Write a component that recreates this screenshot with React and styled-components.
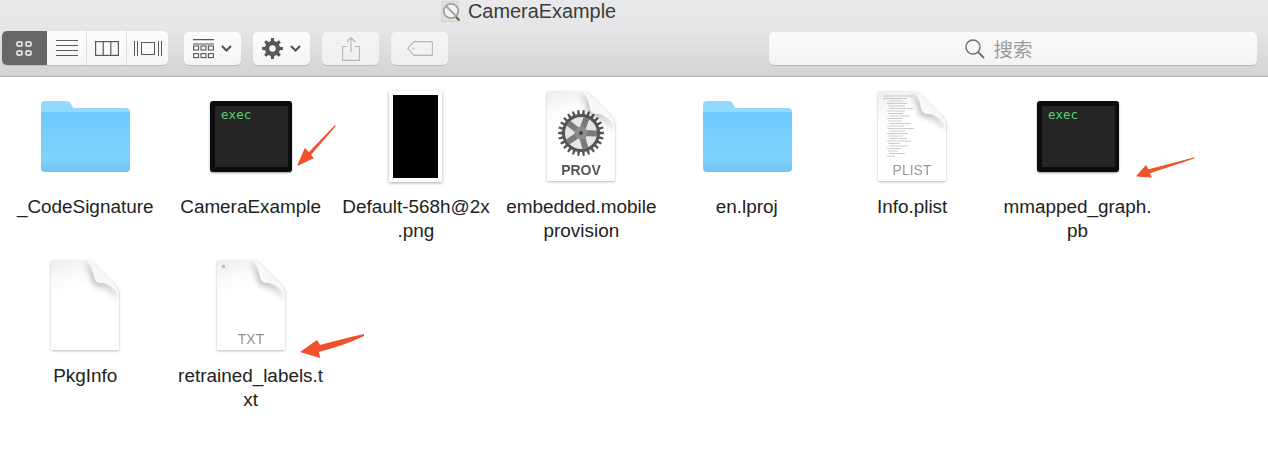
import styled, { createGlobalStyle } from "styled-components";

const GlobalStyle = createGlobalStyle`
  html, body {
    margin: 0;
    background: #fff;
  }
  body {
    font-family: "Liberation Sans", Arial, sans-serif;
    overflow: hidden;
  }
`;

const Window = styled.div`
  width: 1268px;
  height: 450px;
  background: #fff;
  overflow: hidden;
`;

const Toolbar = styled.header`
  height: 76px;
  box-sizing: content-box;
  border-bottom: 1px solid #b4b3b4;
  background: linear-gradient(#e9e8ea, #e5e4e6 40%, #d4d3d4);
`;

const TitleRow = styled.div`
  display: flex;
  align-items: center;
  gap: 6px;
  height: 23px;
  margin-bottom: 8px;
  padding-left: 441px;
`;

const Title = styled.span`
  font-size: 19.9px;
  color: #3c3c3c;
`;

const Controls = styled.div`
  display: flex;
  align-items: flex-start;
  padding: 0 11px 0 2px;
`;

const Segments = styled.div`
  display: flex;
  height: 34px;
  border-radius: 5px;
  overflow: hidden;
  box-shadow: 0 1px 0 #bdbcbd;
`;

const Segment = styled.button`
  display: flex;
  align-items: center;
  justify-content: center;
  width: ${(p) => p.$width}px;
  padding: 0;
  border: 0;
  border-right: 1px solid ${(p) => (p.$active ? "#666" : "#dedede")};
  background: ${(p) => (p.$active ? "#666666" : "linear-gradient(#fdfdfd, #f5f5f5)")};
  color: ${(p) => (p.$active ? "#f4f4f4" : "#5a5a5a")};
  &:last-child {
    border-right: 0;
  }
`;

const ToolButton = styled.button`
  display: flex;
  align-items: center;
  justify-content: center;
  gap: 7px;
  box-sizing: border-box;
  width: ${(p) => p.$width}px;
  height: 33px;
  margin-top: 1px;
  margin-left: ${(p) => p.$gap}px;
  padding: 0;
  border: 0;
  border-radius: 5px;
  background: ${(p) =>
    p.$disabled ? "linear-gradient(#f4f4f4, #efefef)" : "linear-gradient(#fdfdfd, #f5f5f5)"};
  box-shadow: 0 1px 0 #bdbcbd;
  color: ${(p) => (p.$disabled ? "#b6b6b6" : "#585858")};
`;

const SearchBox = styled.div`
  display: flex;
  align-items: center;
  justify-content: center;
  gap: 8px;
  box-sizing: border-box;
  width: 488px;
  height: 33px;
  margin-top: 1px;
  margin-left: auto;
  padding-right: 28px;
  border-radius: 5px;
  background: linear-gradient(#fbfbfb, #f4f3f4);
  box-shadow: 0 1px 0 #b9b8b9;
  color: #6f6f6f;
`;

const SearchText = styled.span`
  font-family: "Noto Sans CJK SC", "Liberation Sans", sans-serif;
  font-size: 19.5px;
  color: #9c9c9c;
`;

const FileGrid = styled.main`
  display: grid;
  grid-template-columns: repeat(7, 165.4px);
  row-gap: 16px;
  padding: 13px 0 0 3px;
`;

const Tile = styled.div`
  position: relative;
  display: flex;
  flex-direction: column;
  align-items: center;
`;

const IconBox = styled.div`
  display: flex;
  align-items: center;
  justify-content: center;
  height: 92px;
  margin-bottom: 13px;
`;

const Label = styled.div`
  width: 164px;
  min-height: 48px;
  margin-left: -1px;
  font-size: 18.9px;
  line-height: 24px;
  color: #222;
  text-align: center;
  white-space: pre-line;
`;

const Thumbnail = styled.div`
  box-sizing: border-box;
  width: 53px;
  height: 91px;
  margin-left: -1px;
  border: 4px solid #fff;
  background: #000;
  box-shadow: 0 1px 3px rgba(0, 0, 0, 0.35);
`;

const ExecFrame = styled.div`
  box-sizing: border-box;
  width: 82px;
  height: 71px;
  padding: 5px 4px 5px 5px;
  border-radius: 3px;
  background: #0c0c0c;
  box-shadow: 0 1px 2px rgba(0, 0, 0, 0.4);
`;

const ExecScreen = styled.div`
  height: 100%;
  padding-left: 6px;
  background: #252525;
  font-family: "DejaVu Sans Mono", "Liberation Mono", monospace;
  font-size: 12.5px;
  line-height: 17px;
  color: #55d66a;
`;

const Callout = styled.svg`
  position: absolute;
  left: ${(p) => p.$left}px;
  top: ${(p) => p.$top}px;
`;

const DocSvg = styled.svg`
  margin-left: -1px;
  filter: drop-shadow(0 1px 1px rgba(0, 0, 0, 0.28));
  overflow: visible;
`;

const Flap = styled.path`
  filter: drop-shadow(-2px 3px 3px rgba(0, 0, 0, 0.28));
`;

// toothed outline, used for the toolbar gear and the PROV badge
function gearPoints(cx, cy, outer, inner, teeth) {
  const pts = [];
  const step = (Math.PI * 2) / teeth;
  for (let i = 0; i < teeth; i++) {
    const a = i * step;
    [
      [-0.3, inner],
      [-0.17, outer],
      [0.17, outer],
      [0.3, inner],
    ].forEach(([o, r]) => {
      const t = a + o * step;
      pts.push(`${(cx + Math.cos(t) * r).toFixed(2)},${(cy + Math.sin(t) * r).toFixed(2)}`);
    });
  }
  return pts.join(" ");
}

const Chevron = () => (
  <svg width="11" height="7" viewBox="0 0 11 7" fill="none" stroke="#505050" strokeWidth="2">
    <path d="M1 1l4.500 4.500L10 1" />
  </svg>
);

const IconCells = () => (
  <svg width="16" height="15" viewBox="0 0 16 15" fill="none" stroke="currentColor" strokeWidth="1.5">
    <rect x="1" y="1" width="5" height="4" rx="1" />
    <rect x="10" y="1" width="5" height="4" rx="1" />
    <rect x="1" y="10" width="5" height="4" rx="1" />
    <rect x="10" y="10" width="5" height="4" rx="1" />
  </svg>
);

const IconList = () => (
  <svg width="22" height="16" viewBox="0 0 22 16" stroke="currentColor" strokeWidth="1">
    <path d="M0 .5h22M0 5.500h22M0 10.500h22M0 15.500h22" />
  </svg>
);

const IconColumns = () => (
  <svg width="24" height="15" viewBox="0 0 24 15" fill="none" stroke="currentColor" strokeWidth="1.2">
    <rect x=".6" y=".6" width="22.8" height="13.8" />
    <path d="M8.200 1v13M15.800 1v13" />
  </svg>
);

const IconCover = () => (
  <svg width="28" height="15" viewBox="0 0 28 15" fill="none" stroke="currentColor" strokeWidth="1">
    <rect x="7.500" y="1.500" width="13" height="12" />
    <path d="M.5 0v15M3.500 0v15M24.500 0v15M27.500 0v15" />
  </svg>
);

const IconArrange = () => (
  <svg width="21" height="20" viewBox="0 0 21 20" fill="none" stroke="currentColor" strokeWidth="1.1">
    <path d="M0 .6h21M0 5h21" />
    <rect x=".6" y="7" width="5" height="4" />
    <rect x="8" y="7" width="5" height="4" />
    <rect x="15.400" y="7" width="5" height="4" />
    <rect x=".6" y="14.600" width="5" height="4" />
    <rect x="8" y="14.600" width="5" height="4" />
    <rect x="15.400" y="14.600" width="5" height="4" />
  </svg>
);

const IconGear = () => (
  <svg width="21" height="21" viewBox="0 0 21 21">
    <polygon points={gearPoints(10.5, 10.5, 10.5, 7.6, 8)} fill="currentColor" />
    <circle cx="10.5" cy="10.5" r="3.2" fill="#f8f8f8" />
  </svg>
);

const IconShare = () => (
  <svg width="18" height="24" viewBox="0 0 18 24" fill="none" stroke="currentColor" strokeWidth="1.1">
    <path d="M5.500 9.500H.6v13.900h16.800V9.500h-4.900M9 15V1M4.800 5L9 .8 13.200 5" />
  </svg>
);

const IconTag = () => (
  <svg width="26" height="15" viewBox="0 0 26 15" fill="none" stroke="currentColor" strokeWidth="1.1">
    <path d="M7 .6h17.400a1 1 0 0 1 1 1v11.800a1 1 0 0 1-1 1H7L.8 7.500z" />
    <circle cx="6.5" cy="7.5" r=".9" fill="currentColor" stroke="none" />
  </svg>
);

const IconSearch = () => (
  <svg width="20" height="20" viewBox="0 0 20 20" fill="none" stroke="currentColor">
    <circle cx="8" cy="8" r="7" strokeWidth="1.4" />
    <path d="M13 13l6 6" strokeWidth="1.8" />
  </svg>
);

const TitleIcon = () => (
  <svg width="21" height="22" viewBox="0 0 21 22">
    <rect x="1" y="0.5" width="16" height="20" fill="#e4e3e2" stroke="#cfcfcf" />
    <circle cx="10" cy="10" r="7.2" fill="#f3f3f3" stroke="#a5a5a5" strokeWidth="2" />
    <path d="M5.500 5.500l9 9" stroke="#a5a5a5" strokeWidth="2" />
    <path d="M15 16l3.500 3.500" stroke="#6b5a3a" strokeWidth="2" />
  </svg>
);

const FolderIcon = () => (
  <svg width="89" height="71" viewBox="0 0 89 71">
    <defs>
      <linearGradient id="folderBody" x1="0" y1="0" x2="0" y2="1">
        <stop offset="0" stopColor="#6dcbfc" />
        <stop offset="0.8" stopColor="#80d3fe" />
        <stop offset="0.84" stopColor="#79cdf7" />
        <stop offset="1" stopColor="#70c4ee" />
      </linearGradient>
    </defs>
    <path d="M0 4a4 4 0 0 1 4-4h21c3 0 4 1 5 3l1 2c.6 1 1.400 2 3 2h51a4 4 0 0 1 4 4v10H0z" fill="#92d9fd" />
    <path d="M0 11h89v56a4 4 0 0 1-4 4H4a4 4 0 0 1-4-4z" fill="url(#folderBody)" />
  </svg>
);

const ProvGear = () => {
  const spokes = [0, 72, 144, 216, 288];
  return (
    <g>
      <polygon points={gearPoints(35, 42, 23, 19, 26)} fill="#555" />
      <circle cx="35" cy="42" r="16" fill="#e6e6e6" />
      {spokes.map((deg) => (
        <rect key={deg} x="32" y="26" width="6" height="16" fill="#7a7a7a" transform={`rotate(${deg + 20} 35 42)`} />
      ))}
      <circle cx="35" cy="42" r="6.5" fill="#8c8c8c" />
      <circle cx="35" cy="42" r="2" fill="#444" />
    </g>
  );
};

const PlistLines = () => {
  const widths = [30, 24, 14, 20, 17, 24, 18, 15, 21, 15, 14, 22, 17, 26, 16, 21, 15, 18, 24, 12, 19, 14, 10, 16, 8];
  return (
    <g stroke="#b5b5b5" strokeWidth="0.7">
      {widths.map((w, i) => (
        <path key={i} d={`M${i < 2 ? 6 : 10 + (i % 3)} ${5 + i * 2.5}h${w}`} />
      ))}
    </g>
  );
};

// document page with a folded top right corner
const DocIcon = ({ tag, tagWeight, tagColor, id, children }) => (
  <DocSvg width="70" height="90" viewBox="0 0 70 90">
    <defs>
      <linearGradient id={`page-${id}`} x1="0" y1="0" x2="0.1" y2="0.4">
        <stop offset="0" stopColor="#ececec" />
        <stop offset="0.6" stopColor="#fbfbfb" />
        <stop offset="1" stopColor="#fff" />
      </linearGradient>
    </defs>
    <path
      d="M1 1.500A1.500 1.500 0 0 1 2.500 0H37c2 0 4 1 6 3l21 21c4 4 5 8 5 12v52.500a1.500 1.500 0 0 1-1.500 1.500h-65A1.500 1.500 0 0 1 1 88.500z"
      fill={`url(#page-${id})`}
    />
    {children}
    <Flap d="M37 0c2 0 4 1 6 3l21 21c4 4 5 8 5 12-5-8-11-13-18-13-4 0-6-2-7-6-1-5-3-12-7-17z" fill="#f8f8f8" />
    {tag && (
      <text
        x="35"
        y="84"
        textAnchor="middle"
        fontFamily="Liberation Sans, Arial, sans-serif"
        fontSize="14"
        fontWeight={tagWeight}
        fill={tagColor}
      >
        {tag}
      </text>
    )}
  </DocSvg>
);

const Exec = () => (
  <ExecFrame>
    <ExecScreen>exec</ExecScreen>
  </ExecFrame>
);

// red hand-drawn annotation arrows
const ArrowThin = () => (
  <Callout $left={129} $top={35} width="40" height="42" viewBox="0 0 40 42">
    <path d="M38 1L12 28l-4-4L1 40l15-7-3-3L38 1z" fill="#f0532a" stroke="#f0532a" strokeWidth="1.2" strokeLinejoin="round" />
  </Callout>
);

const ArrowFlat = () => (
  <Callout $left={141} $top={67} width="60" height="22" viewBox="0 0 60 22">
    <path d="M58 1L12 13l-2-4L1 19l14 1-2-4L58 1z" fill="#f0532a" stroke="#f0532a" strokeWidth="1.2" strokeLinejoin="round" />
  </Callout>
);

const ArrowBold = () => (
  <Callout $left={131} $top={74} width="66" height="26" viewBox="0 0 66 26">
    <path d="M65 1C50 4 36 8 21 12l-3-5L1 19l20 6-1-6C35 15 50 10 65 3z" fill="#f0502a" />
  </Callout>
);

const files = [
  { name: "_CodeSignature", icon: <FolderIcon /> },
  { name: "CameraExample", icon: <Exec />, arrow: <ArrowThin /> },
  { name: "Default-568h@2x\n.png", icon: <Thumbnail /> },
  {
    name: "embedded.mobile\nprovision",
    icon: (
      <DocIcon id="prov" tag="PROV" tagWeight="700" tagColor="#555">
        <ProvGear />
      </DocIcon>
    ),
  },
  { name: "en.lproj", icon: <FolderIcon /> },
  {
    name: "Info.plist",
    icon: (
      <DocIcon id="plist" tag="PLIST" tagWeight="400" tagColor="#9a9a9a">
        <PlistLines />
      </DocIcon>
    ),
  },
  { name: "mmapped_graph.\npb", icon: <Exec />, arrow: <ArrowFlat /> },
  { name: "PkgInfo", icon: <DocIcon id="blank" /> },
  {
    name: "retrained_labels.t\nxt",
    icon: (
      <DocIcon id="txt" tag="TXT" tagWeight="400" tagColor="#8f8f8f">
        <path d="M6 5h3v3H6z" fill="#bbb" />
      </DocIcon>
    ),
    arrow: <ArrowBold />,
  },
];

export default function App() {
  return (
    <Window>
      <GlobalStyle />
      <Toolbar>
        <TitleRow>
          <TitleIcon />
          <Title>CameraExample</Title>
        </TitleRow>
        <Controls>
          <Segments>
            <Segment $width={45} $active>
              <IconCells />
            </Segment>
            <Segment $width={40}>
              <IconList />
            </Segment>
            <Segment $width={40}>
              <IconColumns />
            </Segment>
            <Segment $width={41}>
              <IconCover />
            </Segment>
          </Segments>
          <ToolButton $width={57} $gap={16}>
            <IconArrange />
            <Chevron />
          </ToolButton>
          <ToolButton $width={57} $gap={12}>
            <IconGear />
            <Chevron />
          </ToolButton>
          <ToolButton $width={57} $gap={12} $disabled>
            <IconShare />
          </ToolButton>
          <ToolButton $width={57} $gap={12} $disabled>
            <IconTag />
          </ToolButton>
          <SearchBox>
            <IconSearch />
            <SearchText>搜索</SearchText>
          </SearchBox>
        </Controls>
      </Toolbar>
      <FileGrid>
        {files.map((file) => (
          <Tile key={file.name}>
            <IconBox>{file.icon}</IconBox>
            <Label>{file.name}</Label>
            {file.arrow}
          </Tile>
        ))}
      </FileGrid>
    </Window>
  );
}
